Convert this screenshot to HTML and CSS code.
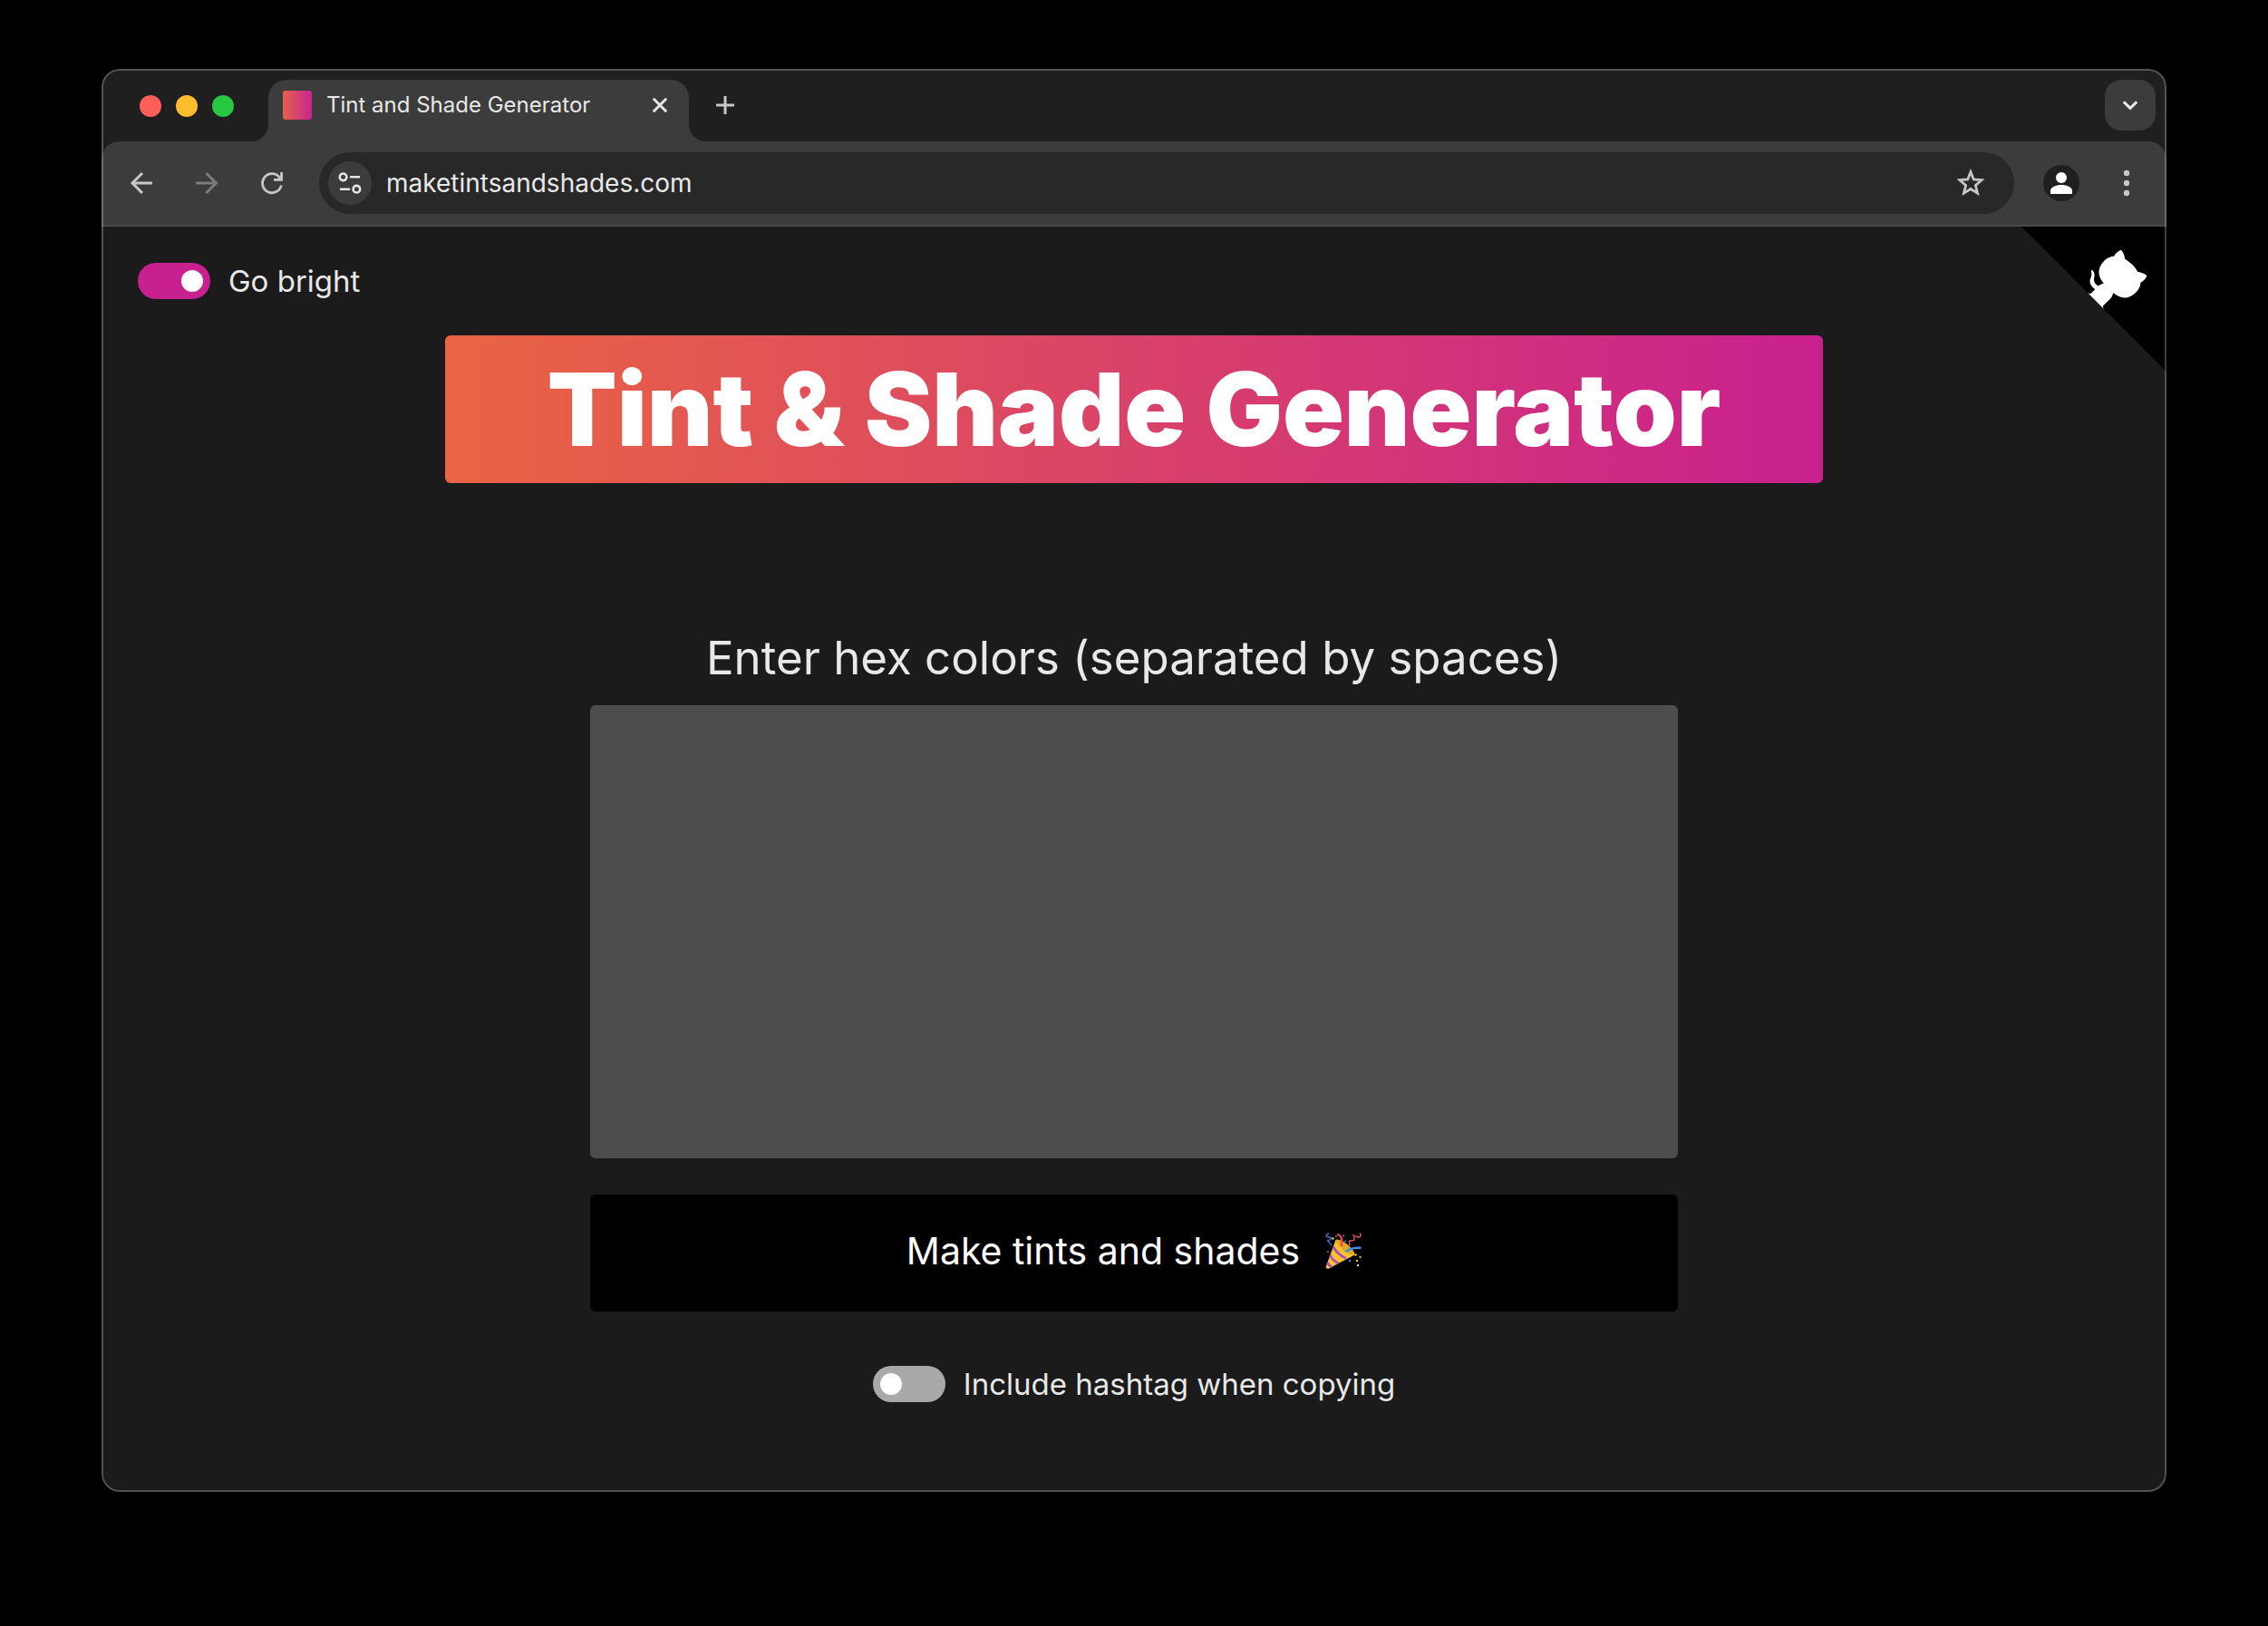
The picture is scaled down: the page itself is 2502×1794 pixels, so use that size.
FILE: index.html
```html
<!DOCTYPE html>
<html lang="en">
<head>
<meta charset="utf-8">
<meta name="viewport" content="width=device-width, initial-scale=1">
<title>Tint and Shade Generator</title>
<link rel="stylesheet" href="styles.css">
</head>
<body>
<div class="window">
  <div class="tab-strip">
    <div class="lights">
      <button class="light light-close" type="button" aria-label="Close window"></button>
      <button class="light light-minimize" type="button" aria-label="Minimize window"></button>
      <button class="light light-zoom" type="button" aria-label="Zoom window"></button>
    </div>
    <div class="tab">
      <span class="favicon"></span>
      <span class="tab-title">Tint and Shade Generator</span>
      <button class="icon-button tab-close" type="button" aria-label="Close tab">
        <svg width="32" height="32" viewBox="0 0 32 32" fill="none" stroke="#e6e6e6" stroke-width="3"><path d="M8.8 8.8l14.4 14.4M23.2 8.8L8.8 23.2"/></svg>
      </button>
    </div>
    <button class="icon-button" type="button" aria-label="New tab">
      <svg width="32" height="32" viewBox="0 0 32 32" fill="none" stroke="#c7c7c7" stroke-width="3"><path d="M16 6v20M6 16h20"/></svg>
    </button>
    <button class="icon-button tab-search" type="button" aria-label="Search tabs">
      <svg width="32" height="32" viewBox="0 0 32 32" fill="none" stroke="#e6e6e6" stroke-width="3"><path d="M8.8 12.4L16 19.4l7.200-7"/></svg>
    </button>
  </div>

  <div class="toolbar">
    <button class="icon-button" type="button" aria-label="Back">
      <svg width="40" height="40" viewBox="0 0 40 40" fill="none" stroke="#c7c7c7" stroke-width="3"><path d="M32 20H10M21 9L10 20l11 11"/></svg>
    </button>
    <button class="icon-button" type="button" aria-label="Forward">
      <svg width="40" height="40" viewBox="0 0 40 40" fill="none" stroke="#7c7c7c" stroke-width="3"><path d="M8 20h22M19.500 9l11 11-11 11"/></svg>
    </button>
    <button class="icon-button" type="button" aria-label="Reload">
      <svg width="40" height="40" viewBox="0 0 40 40" fill="none" stroke="#c7c7c7" stroke-width="2.800"><path d="M30.300 22.500a10.500 10.500 0 1 1-2.300-9.200l2.500 2.700"/><path d="M30.600 8v8.400h-8.600"/></svg>
    </button>
    <div class="omnibox">
      <button class="icon-button site-info" type="button" aria-label="View site information">
        <svg width="28" height="28" viewBox="0 0 28 28" fill="none" stroke="#e6e6e6" stroke-width="2.600"><circle cx="6.600" cy="7.300" r="3.800"/><path d="M14 7.300h11M3 20.700h11"/><circle cx="21.400" cy="20.700" r="3.800"/></svg>
      </button>
      <input class="address" type="text" aria-label="Address" value="maketintsandshades.com">
      <button class="icon-button" type="button" aria-label="Bookmark this tab">
        <svg width="32" height="32" viewBox="0 0 32 32" fill="none" stroke="#c7c7c7" stroke-width="2.800"><path d="M16 3.800l3.300 8.200 8.800.7-6.700 5.800 2.100 8.600L16 22.500l-7.500 4.600 2.100-8.600-6.700-5.800 8.800-.7z"/></svg>
      </button>
    </div>
    <button class="icon-button" type="button" aria-label="Profile">
      <svg width="40" height="40" viewBox="0 0 40 40"><circle cx="20" cy="20" r="20" fill="#1f1f1f"/><circle cx="20" cy="14" r="6" fill="#fff"/><path d="M8 32v-3.500C8 24.500 14 22 20 22s12 2.500 12 6.500V32z" fill="#fff"/></svg>
    </button>
    <button class="icon-button" type="button" aria-label="Menu">
      <svg width="40" height="40" viewBox="0 0 40 40" fill="#c7c7c7"><circle cx="20" cy="9" r="3.200"/><circle cx="20" cy="20" r="3.200"/><circle cx="20" cy="31" r="3.200"/></svg>
    </button>
  </div>

  <main class="page">
    <a class="github-corner" href="#" aria-label="View source on GitHub">
      <svg width="160" height="160" viewBox="0 0 250 250" fill="#fff"><path fill="#000" d="M0 0l115 115h15l12 27 108 108V0z"/><path d="M128.300 109C113.800 99.700 119 89.600 119 89.600c3-6.900 1.500-11 1.500-11-1.300-6.600 2.900-2.300 2.900-2.300 3.900 4.600 2.100 11 2.100 11-2.600 10.300 5.100 14.600 8.900 15.900z"/><path d="M115 115c-.1.100 3.700 1.500 4.800.4l13.900-13.800c3.200-2.400 6.200-3.200 8.500-3-8.400-10.600-14.700-24.200 1.600-40.600 4.700-4.600 10.200-6.800 15.900-7 .6-1.600 3.500-7.400 11.700-10.900 0 0 4.700 2.400 7.400 16.100 4.300 2.400 8.400 5.600 12.100 9.200 3.600 3.600 6.800 7.800 9.200 12.200 13.700 2.600 16.200 7.300 16.200 7.300-3.600 8.200-9.400 11.100-10.900 11.700-.3 5.800-2.400 11.200-7.100 15.900-16.400 16.400-30 10-40.600 1.600.2 2.800-1 6.800-5 10.800L141 136.500c-1.200 1.200.6 5.400.8 5.300z"/></svg>
    </a>
    <label class="switch">
      <input type="checkbox" role="switch" checked>
      <span>Go bright</span>
    </label>
    <h1 class="banner">Tint &amp; Shade Generator</h1>
    <form class="generator">
      <label class="prompt" for="colors">Enter hex colors (separated by spaces)</label>
      <textarea class="colors" id="colors"></textarea>
      <button class="make" type="button">
        <span>Make tints and shades</span>
        <svg width="40" height="40" viewBox="0 0 40 40" fill="none" stroke-linecap="round" aria-hidden="true">
          <path fill="#fcc32d" d="M.8 37.500L11.500 8c5-2.500 21 9.500 21 16.500L4 39.600c-2 .8-3.700-.6-3.200-2.100z"/>
          <path fill="#e3a823" d="M11.500 8c1 6 12 17 21 16.500-.2-6-15.500-19-21-16.500z"/>
          <path stroke="#a64fc0" stroke-width="2.800" stroke-linecap="butt" d="M9 15.500c2 5 8 10 14 13M5.500 25c1.500 3.500 5 7 9 8.800M2.500 33c.8 2.200 2.500 4 4.700 5"/>
          <path stroke="#e8435a" stroke-width="2.400" d="M14 2c4 1.500 5 6 4 12"/>
          <path stroke="#3e8be4" stroke-width="2.600" d="M23.500 20.500c4-3 9-4 15-3.700"/>
          <path stroke="#3579d3" stroke-width="1.400" d="M3.500 1C-.5 3 1 5.500 4.500 5s2 3-1 3.500S6 11 6.500 14"/>
          <path stroke="#dc5470" stroke-width="1.400" d="M38.500 1c1.500 3-.5 5-3.500 3.500s-3.500 0-3 2.500-3 1-5 2 1 3-.5 4.500"/>
          <g stroke="none"><circle cx="8.500" cy="6.500" r="1.300" fill="#f6c830"/><circle cx="20" cy="3.500" r="1" fill="#3e8be4"/><circle cx="22" cy="9.500" r="1" fill="#3e8be4"/><circle cx="12" cy="4" r="1" fill="#e8435a"/><circle cx="31" cy="3" r="1" fill="#e8435a"/><circle cx="3" cy="21" r="1.100" fill="#e8435a"/><circle cx="33.500" cy="24.500" r="1.200" fill="#f6c830"/><circle cx="38.500" cy="27" r="1.200" fill="#a6c64c"/><circle cx="27" cy="31" r="1.200" fill="#3e8be4"/><circle cx="35" cy="31" r="1.200" fill="#f6c830"/><circle cx="36" cy="36" r="1.200" fill="#ecdcb0"/></g>
        </svg>
      </button>
      <label class="switch hashtag">
        <input type="checkbox" role="switch">
        <span>Include hashtag when copying</span>
      </label>
    </form>
  </main>
</div>
</body>
</html>
```
FILE: styles.css
```css
* {
  box-sizing: border-box;
}

body {
  margin: 0;
  padding: 76px 112px 148px;
  background: #000;
  color: #e8e8e8;
  font-family: Inter, "Liberation Sans", sans-serif;
}

button,
input,
textarea {
  margin: 0;
  padding: 0;
  border: 0;
  color: inherit;
  font: inherit;
}

svg {
  display: block;
  flex: none;
}

/* Browser window */

.window {
  position: relative;
  overflow: hidden;
  border-radius: 20px;
  background: #1f1f1f;
}

.window::after {
  content: "";
  position: absolute;
  inset: 0;
  border: 2px solid rgba(255, 255, 255, 0.24);
  border-radius: 20px;
  pointer-events: none;
}

.icon-button {
  display: flex;
  flex: none;
  align-items: center;
  justify-content: center;
  background: none;
}

/* Tab strip */

.tab-strip {
  display: flex;
  align-items: center;
  padding: 12px 12px 0 42px;
}

.lights {
  display: flex;
  gap: 16px;
  margin: 0 38px 10px 0;
}

.light {
  width: 24px;
  height: 24px;
  border-radius: 50%;
}

.light-close {
  background: #ff5f57;
}

.light-minimize {
  background: #febc2e;
}

.light-zoom {
  background: #28c840;
}

.tab {
  position: relative;
  display: flex;
  align-items: flex-start;
  width: 464px;
  height: 68px;
  padding: 12px 16px 0;
  border-radius: 20px 20px 0 0;
  background: #3c3c3c;
}

.tab::before,
.tab::after {
  content: "";
  position: absolute;
  bottom: 0;
  width: 20px;
  height: 20px;
}

.tab::before {
  right: 100%;
  background: radial-gradient(circle at 0 0, transparent 20px, #3c3c3c 21px);
}

.tab::after {
  left: 100%;
  background: radial-gradient(circle at 100% 0, transparent 20px, #3c3c3c 21px);
}

.favicon {
  width: 32px;
  height: 32px;
  margin-right: 16px;
  border-radius: 3px;
  background: linear-gradient(90deg, #e5604c, #c82490);
}

.tab-title {
  flex: 1;
  font-size: 24px;
  line-height: 32px;
  white-space: nowrap;
}

.tab-strip > .icon-button {
  height: 56px;
  margin-bottom: 12px;
}

.tab + .icon-button {
  margin-left: 24px;
}

.tab-strip > .tab-search {
  width: 56px;
  margin-left: auto;
  border-radius: 18px;
  background: #3c3c3c;
}

/* Toolbar */

.toolbar {
  display: flex;
  align-items: center;
  gap: 32px;
  padding: 12px 24px;
  border-bottom: 2px solid #4a4a4a;
  border-radius: 20px 20px 0 0;
  background: #3c3c3c;
}

.omnibox {
  display: flex;
  flex: 1;
  align-items: center;
  height: 68px;
  padding: 0 32px 0 10px;
  border-radius: 34px;
  background: #282828;
}

.site-info {
  width: 48px;
  height: 48px;
  margin-right: 16px;
  border-radius: 50%;
  background: #3c3c3c;
}

.address {
  flex: 1;
  min-width: 0;
  background: none;
  font-size: 28px;
  line-height: 36px;
}

/* Page */

.page {
  position: relative;
  padding: 40px 40px 99px;
  background: #1b1b1b;
}

.github-corner {
  position: absolute;
  top: 0;
  right: 0;
}

.switch {
  display: flex;
  gap: 20px;
  align-items: center;
  width: fit-content;
  font-size: 33px;
  line-height: 40px;
}

.switch input {
  appearance: none;
  display: flex;
  flex: none;
  width: 80px;
  height: 40px;
  padding: 8px;
  border-radius: 20px;
  background: #a9a9a9;
}

.switch input::before {
  content: "";
  width: 24px;
  height: 24px;
  border-radius: 50%;
  background: #fff;
}

.switch input:checked {
  justify-content: flex-end;
  background: #c9208f;
}

.banner {
  max-width: 1520px;
  margin: 40px auto 0;
  padding: 20px;
  border-radius: 6px;
  background: linear-gradient(90deg, #e96443, #c9208f);
  color: #fff;
  font-size: 112px;
  font-weight: 900;
  line-height: 123px;
  text-align: center;
}

.generator {
  display: flex;
  flex-direction: column;
  max-width: 1200px;
  margin: 161px auto 0;
}

.prompt {
  margin-bottom: 20px;
  font-size: 51px;
  line-height: 64px;
  text-align: center;
}

.colors {
  height: 500px;
  padding: 20px;
  border-radius: 6px;
  background: #4d4d4d;
  font-size: 41px;
  resize: none;
}

.make {
  display: flex;
  gap: 28px;
  align-items: center;
  justify-content: center;
  margin: 40px 0 60px;
  padding: 38px 40px 43px;
  border-radius: 6px;
  background: #000;
  color: #fff;
  font-size: 41px;
  line-height: 48px;
}

.hashtag {
  align-self: center;
}
```
